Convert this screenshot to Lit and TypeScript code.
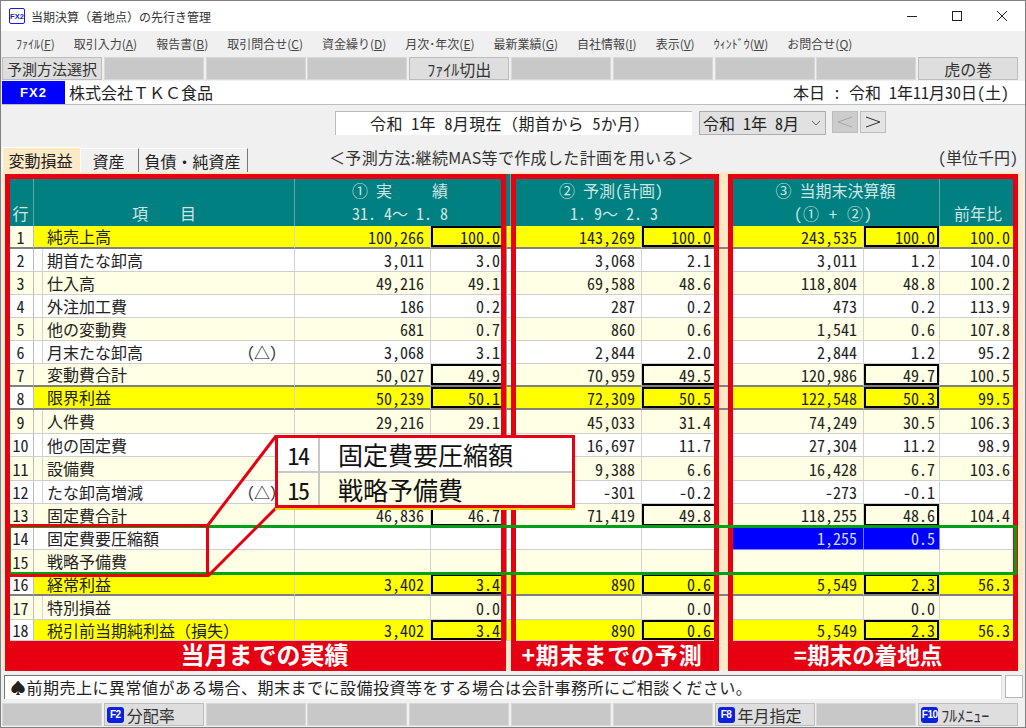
import { LitElement, html, css } from "lit";
import { customElement } from "lit/decorators.js";

const H = [23, 23, 23, 23, 23, 23, 23, 23, 24, 23, 24, 23, 23, 23, 24, 22, 24, 21];
const raw: [string, string[], string?][] = [
  ["純売上高", ["100,266", "100.0", "143,269", "100.0", "243,535", "100.0", "100.0"], "y"],
  ["期首たな卸高", ["3,011", "3.0", "3,068", "2.1", "3,011", "1.2", "104.0"]],
  ["仕入高", ["49,216", "49.1", "69,588", "48.6", "118,804", "48.8", "100.2"]],
  ["外注加工費", ["186", "0.2", "287", "0.2", "473", "0.2", "113.9"]],
  ["他の変動費", ["681", "0.7", "860", "0.6", "1,541", "0.6", "107.8"]],
  ["月末たな卸高", ["3,068", "3.1", "2,844", "2.0", "2,844", "1.2", "95.2"]],
  ["変動費合計", ["50,027", "49.9", "70,959", "49.5", "120,986", "49.7", "100.5"], "sub"],
  ["限界利益", ["50,239", "50.1", "72,309", "50.5", "122,548", "50.3", "99.5"], "y"],
  ["人件費", ["29,216", "29.1", "45,033", "31.4", "74,249", "30.5", "106.3"]],
  ["他の固定費", ["", "", "16,697", "11.7", "27,304", "11.2", "98.9"]],
  ["設備費", ["", "", "9,388", "6.6", "16,428", "6.7", "103.6"]],
  ["たな卸高増減", ["", "", "-301", "-0.2", "-273", "-0.1", ""]],
  ["固定費合計", ["46,836", "46.7", "71,419", "49.8", "118,255", "48.6", "104.4"], "sub"],
  ["固定費要圧縮額", ["", "", "", "", "1,255", "0.5", ""], "plain"],
  ["戦略予備費", ["", "", "", "", "", "", ""], "plain"],
  ["経常利益", ["3,402", "3.4", "890", "0.6", "5,549", "2.3", "56.3"], "y"],
  ["特別損益", ["", "0.0", "", "0.0", "", "0.0", ""]],
  ["税引前当期純利益（損失）", ["3,402", "3.4", "890", "0.6", "5,549", "2.3", "56.3"], "y"],
];
const menus: [string, string, string][] = [
  ["ﾌｧｲﾙ(", "F", ")"], ["取引入力(", "A", ")"], ["報告書(", "B", ")"], ["取引問合せ(", "C", ")"],
  ["資金繰り(", "D", ")"], ["月次･年次(", "E", ")"], ["最新業績(", "G", ")"], ["自社情報(", "I", ")"],
  ["表示(", "V", ")"], ["ｳｨﾝﾄﾞｳ(", "W", ")"], ["お問合せ(", "Q", ")"],
];

@customElement("app-root")
export class AppRoot extends LitElement {
  static styles = css`
    :host {
      display: block; width: 1026px; height: 728px; overflow: hidden;
      font-family: "Noto Sans CJK JP", "Liberation Sans", sans-serif;
      font-size: 16px; color: #222;
    }
    * { box-sizing: border-box; }
    .hw { font-feature-settings: "hwid"; }
    .fw { font-feature-settings: normal; }
    .win {
      position: relative; width: 1026px; height: 728px; background: #f0f0f0;
      border: 1px solid #808080; display: flex; flex-direction: column;
    }
    .title { height: 30px; background: #fff; display: flex; align-items: center; padding-left: 8px; font-size: 12px; color: #333; flex: none; }
    .title svg.logo { margin-right: 6px; }
    .wc { margin-left: auto; display: flex; align-items: center; gap: 33px; padding-right: 17px; }
    .menu { height: 25px; display: flex; align-items: center; gap: 19px; padding-left: 15px; font-size: 12px; color: #444; flex: none; white-space: nowrap; }
    .slots { display: grid; grid-template-columns: repeat(10, 100px); column-gap: 1.8px; padding-left: 1px; flex: none; }
    .tool { height: 25px; padding-top: 1px; }
    .slot { height: 23px; background: #c8c8c8; border: 1px solid #d8d8d8; display: flex; align-items: center; justify-content: center; line-height: 1; white-space: nowrap; }
    .slot.on { background: #dedede; border: 1px solid #bdbdbd; color: #333; }
    .slot.w15 { font-size: 15px; }
    .co { height: 24px; display: flex; background: #fff; border-bottom: 1px solid #bdbdbd; margin-left: 1px; flex: none; }
    .fx { width: 63px; background: #0000ff; color: #fff; font-weight: 700; font-size: 13px; display: flex; align-items: center; justify-content: center; font-family: "Liberation Sans", sans-serif; letter-spacing: 1px; }
    .coname { padding-left: 4px; line-height: 23px; }
    .today { margin-left: auto; padding-right: 16px; line-height: 23px; white-space: pre; }
    .dater { height: 42px; padding: 6px 0 0 334px; display: flex; flex: none; }
    .datebox { width: 357px; height: 24px; background: #fff; border-left: 1px solid #bbb; border-top: 1px solid #bbb; text-align: center; line-height: 22px; white-space: pre; letter-spacing: .4px; padding-right: 8px; }
    .sel { width: 127px; height: 24px; margin-left: 7px; background: #e1e1e1; border: 1px solid #adadad; padding-left: 3px; line-height: 22px; display: flex; align-items: center; white-space: pre; color: #222; }
    .sel svg { margin-left: auto; margin-right: 4px; }
    .nav { width: 26px; height: 22px; margin-left: 6px; border: 1px solid #bdbdbd; background: #e4e4e4; display: flex; align-items: center; justify-content: center; }
    .nav.off { background: #cccccc; margin-left: 6px; }
    .nav.next { margin-left: 2px; }
    .tabs { height: 25px; display: flex; flex: none; align-items: flex-end; white-space: nowrap; padding-left: 1px; }
    .tab { height: 24px; line-height: 24px; text-align: center; border-right: 1px solid #777; border-top: 1px solid #fff; padding-right: 2px; }
    .t1 { width: 79px; background: #fde9c6; border-right: 1px solid #fff; height: 25px; border-top: 1px solid #fff; border-left: 1px solid #fff; }
    .t2 { width: 58px; }
    .t3 { width: 108px; margin-left: 1px; }
    .mid { margin-left: 81px; line-height: 20px; align-self: flex-start; color: #333; letter-spacing: .35px; }
    .unit { margin-left: auto; padding-right: 7px; line-height: 20px; align-self: flex-start; color: #333; }
    .panel { height: 498px; margin: 0 2px 0 1px; background: #fde9c6; padding: 2px 0 0 6px; flex: none; }
    .g { display: grid; grid-template-columns: 26px 9px 252px 136px 75px 5px 131px 76px 14px 132px 76px 77px; width: 1009px; }
    .hd { height: 52px; font-feature-settings: "hwid"; }
    .hd > div { background: #008080; color: #cfe4e3; border-right: 1px solid #5ea9a7; display: flex; flex-direction: column; justify-content: flex-end; align-items: center; white-space: pre; line-height: 23px; padding-bottom: 1px; }
    .hd > .gp { background: transparent; border: none; }
    .hd .s2 { grid-column: span 2; }
    .hd .l2 { padding-right: 6px; }
    .hd .l3 { padding-right: 4px; letter-spacing: 1px; }
    .row { --bg: #fff; }
    .row > div { background: var(--bg); border-bottom: 1px solid #cfcfcf; border-right: 1px solid #d4d4d4; text-align: right; padding-right: 5px; white-space: pre; display: flex; align-items: center; justify-content: flex-end; line-height: 1; font-feature-settings: "hwid"; }
    .row.odd { --bg: #ffffe6; }
    .row.y { --bg: #ffff00; }
    .row > .no { background: #fff; justify-content: center; padding: 0; border-right: 1px solid #bdbdbd; }
    .row.odd > .no { background: #ffffe6; }
    .row.y > .no { background: #fff; }
    .row.y.first > .no { background: #ffffe6; }
    .row > .ind { padding: 0; }
    .row > .lbl { justify-content: space-between; padding: 0 8px 1px 4px; font-feature-settings: normal; }
    .row.flat > .ind { border-right: none; }
    .row.heavy > div { border-bottom: 2px solid #808080; }
    .row > .gp { background: transparent; border: none; }
    .row > .box { box-shadow: inset 0 0 0 2px #000; }
    .row > .v { padding-right: 6px; }
    .row > .p2 { padding-right: 6px; }
    .row > .p3 { padding-right: 4px; }
    .row > .yy { padding-right: 6px; }
    .row > .blue { background: #0000ff; color: #d6dcff; border-color: #7f7fff; }
    .row > .fill { padding: 0; border-right: none; border-left: 1px solid #9a9a9a; }
    .status { height: 32px; padding: 5px 0 0 3px; display: flex; gap: 3px; flex: none; }
    .msg { width: 998px; height: 24px; background: #fff; border-left: 1px solid #777; border-top: 1px solid #777; border-right: 1px solid #ddd; line-height: 22px; padding-left: 5px; letter-spacing: .5px; white-space: nowrap; color: #222; }
    .blank { width: 18px; height: 23px; background: #fff; border: 1px solid #b5b5b5; }
    .fn { height: 24px; padding-top: 1px; }
    .fn .slot { justify-content: flex-start; padding-left: 2px; }
    .fk { background: #0a22e0; color: #fff; border-radius: 3px; width: 17px; height: 16px; font-size: 10px; font-weight: 700; font-family: "Liberation Sans", sans-serif; display: inline-flex; align-items: center; justify-content: center; margin-right: 3px; letter-spacing: -.5px; flex: none; }
    .layer { position: absolute; left: -1px; top: -1px; width: 1026px; height: 728px; pointer-events: none; }
    .frame { position: absolute; top: 174px; height: 497px; border: 5px solid #e60012; display: flex; flex-direction: column; justify-content: flex-end; }
    .f1 { left: 5px; width: 501px; }
    .f2 { left: 511px; width: 208px; }
    .f3 { left: 728px; width: 290px; }
    .lab { height: 26px; margin: 0 -1px -1px; background: #e60012; color: #fff; font-weight: 700; font-size: 24px; line-height: 26px; text-align: center; white-space: nowrap; }
    .f1 .lab { padding-left: 18px; }
    .f2 .lab { font-size: 23px; padding-right: 6px; letter-spacing: .8px; }
    .f3 .lab { font-size: 22.5px; padding-right: 10px; }
    .green { position: absolute; left: 8px; top: 525px; width: 1009px; height: 50px; border: 3px solid #00a014; }
    .redbox { position: absolute; left: 7px; top: 524px; width: 202px; height: 53px; border: 3px solid #e60012; }
    .lines { position: absolute; left: 0; top: 0; }
    .call { position: absolute; left: 275px; top: 435px; width: 300px; height: 73px; border: 3px solid #e60012; box-shadow: 0 2px 0 #f0d400; }
    .cr { height: 35px; display: flex; background: #fff; border-bottom: 2px solid #c8c8c8; align-items: center; }
    .cr.b { background: #ffffe6; height: 32px; border: none; }
    .cn { width: 42px; height: 100%; border-right: 2px solid #c8c8c8; display: flex; align-items: center; justify-content: center; font-size: 24px; letter-spacing: -1.5px; color: #111; }
    .ct { padding-left: 18px; font-size: 25px; color: #111; line-height: 1; white-space: nowrap; }
  `;

  private menuItem(m: [string, string, string]) {
    return html`<span>${m[0]}<u>${m[1]}</u>${m[2]}</span>`;
  }

  private row(r: [string, string[], string?], i: number) {
    const [label, v, kind] = r;
    const y = kind === "y";
    const boxed = y || kind === "sub";
    const n = i + 1;
    const heavy = [1, 7, 8, 16].includes(n);
    const flat = y || kind === "sub" || kind === "plain";
    const cls = `row g ${n % 2 ? "odd" : ""} ${y ? "y" : ""} ${heavy ? "heavy" : ""} ${flat ? "flat" : ""} ${n === 1 ? "first" : ""}`;
    const b = n === 14 ? "blue" : "";
    return html`<div class=${cls} style="height:${H[i]}px">
      <div class="no">${n}</div><div class="ind"></div>
      <div class="lbl"><span>${label}</span>${n === 6 || n === 12 ? html`<span>（△）</span>` : ""}</div>
      <div class="v">${v[0]}</div><div class=${boxed ? "box" : ""}>${v[1]}</div><div class="fill"></div>
      <div class="v">${v[2]}</div><div class="p2 ${boxed ? "box" : ""}">${v[3]}</div><div class="gp"></div>
      <div class="v ${b}">${v[4]}</div><div class="p3 ${b} ${boxed ? "box" : ""}">${v[5]}</div><div class="yy">${v[6]}</div>
    </div>`;
  }

  render() {
    return html`<div class="win">
      <div class="title">
        <svg class="logo" width="16" height="16" viewBox="0 0 16 16"><rect x=".5" y=".5" width="15" height="15" rx="1.5" fill="#fff" stroke="#1a1ae0"/><text x="8" y="11" font-size="7.5" font-weight="700" text-anchor="middle" fill="#1a1ab0" font-family="Liberation Sans">FX2</text></svg>
        <span>当期決算（着地点）の先行き管理</span>
        <div class="wc">
          <svg width="12" height="12" viewBox="0 0 12 12"><path d="M1 6.5h10" stroke="#222" fill="none"/></svg>
          <svg width="12" height="12" viewBox="0 0 12 12"><rect x="1.5" y="1.5" width="9" height="9" stroke="#222" fill="none"/></svg>
          <svg width="12" height="12" viewBox="0 0 12 12"><path d="M1 1l10 10M11 1L1 11" stroke="#222" fill="none"/></svg>
        </div>
      </div>
      <div class="menu">${menus.map((m) => this.menuItem(m))}</div>
      <div class="slots tool">
        <div class="slot on w15">予測方法選択</div><div class="slot"></div><div class="slot"></div><div class="slot"></div>
        <div class="slot on">ﾌｧｲﾙ切出</div><div class="slot"></div><div class="slot"></div><div class="slot"></div><div class="slot"></div>
        <div class="slot on">虎の巻</div>
      </div>
      <div class="co">
        <div class="fx">FX2</div><div class="coname">株式会社ＴＫＣ食品</div>
        <div class="today hw">本日 : 令和 1年11月30日(土)</div>
      </div>
      <div class="dater">
        <div class="datebox hw">令和 1年 8月現在<span class="fw">（</span>期首から 5か月<span class="fw">）</span></div>
        <div class="sel hw">令和 1年 8月<svg width="10" height="6" viewBox="0 0 10 6"><path d="M1 1l4 4 4-4" stroke="#666" fill="none"/></svg></div>
        <div class="nav off"><svg width="16" height="12" viewBox="0 0 16 12"><path d="M15 1L1 6l14 5" stroke="#a8a8a8" fill="none"/></svg></div>
        <div class="nav next"><svg width="16" height="12" viewBox="0 0 16 12"><path d="M1 1l14 5L1 11" stroke="#333" fill="none"/></svg></div>
      </div>
      <div class="tabs">
        <div class="tab t1">変動損益</div><div class="tab t2">資産</div><div class="tab t3">負債・純資産</div>
        <div class="mid">＜予測方法:継続MAS等で作成した計画を用いる＞</div>
        <div class="unit hw">(単位千円)</div>
      </div>
      <div class="panel">
        <div class="g hd">
          <div>行</div>
          <div class="s2"><span>項<span class="fw">　　</span>目</span></div>
          <div class="s2"><span>① 実<span class="fw">　　</span> 績</span><span>31. 4<span class="fw">～</span> 1. 8</span></div>
          <div></div>
          <div class="s2"><span class="l2">② 予測(計画)</span><span>1. 9<span class="fw">～</span> 2. 3</span></div>
          <div class="gp"></div>
          <div class="s2"><span>③ 当期末決算額</span><span class="l3">(① + ②)</span></div>
          <div>前年比</div>
        </div>
        ${raw.map((r, i) => this.row(r, i))}
      </div>
      <div class="status">
        <div class="msg">♠前期売上に異常値がある場合、期末までに設備投資等をする場合は会計事務所にご相談ください。</div>
        <div class="blank"></div>
      </div>
      <div class="slots fn">
        <div class="slot"></div>
        <div class="slot on"><span class="fk">F2</span>分配率</div>
        <div class="slot"></div><div class="slot"></div><div class="slot"></div><div class="slot"></div><div class="slot"></div>
        <div class="slot on"><span class="fk">F8</span>年月指定</div>
        <div class="slot"></div>
        <div class="slot on"><span class="fk">F10</span>ﾌﾙﾒﾆｭｰ</div>
      </div>
      <div class="layer">
        <div class="frame f1"><div class="lab">当月までの実績</div></div>
        <div class="frame f2"><div class="lab">+期末までの予測</div></div>
        <div class="frame f3"><div class="lab">=期末の着地点</div></div>
        <div class="green"></div>
        <div class="redbox"></div>
        <svg class="lines" width="1026" height="728" viewBox="0 0 1026 728"><path d="M208 525L276 436M208 576L276 508" stroke="#e60012" stroke-width="3" fill="none"/></svg>
        <div class="call">
          <div class="cr"><div class="cn hw">14</div><div class="ct">固定費要圧縮額</div></div>
          <div class="cr b"><div class="cn hw">15</div><div class="ct">戦略予備費</div></div>
        </div>
      </div>
    </div>`;
  }
}
